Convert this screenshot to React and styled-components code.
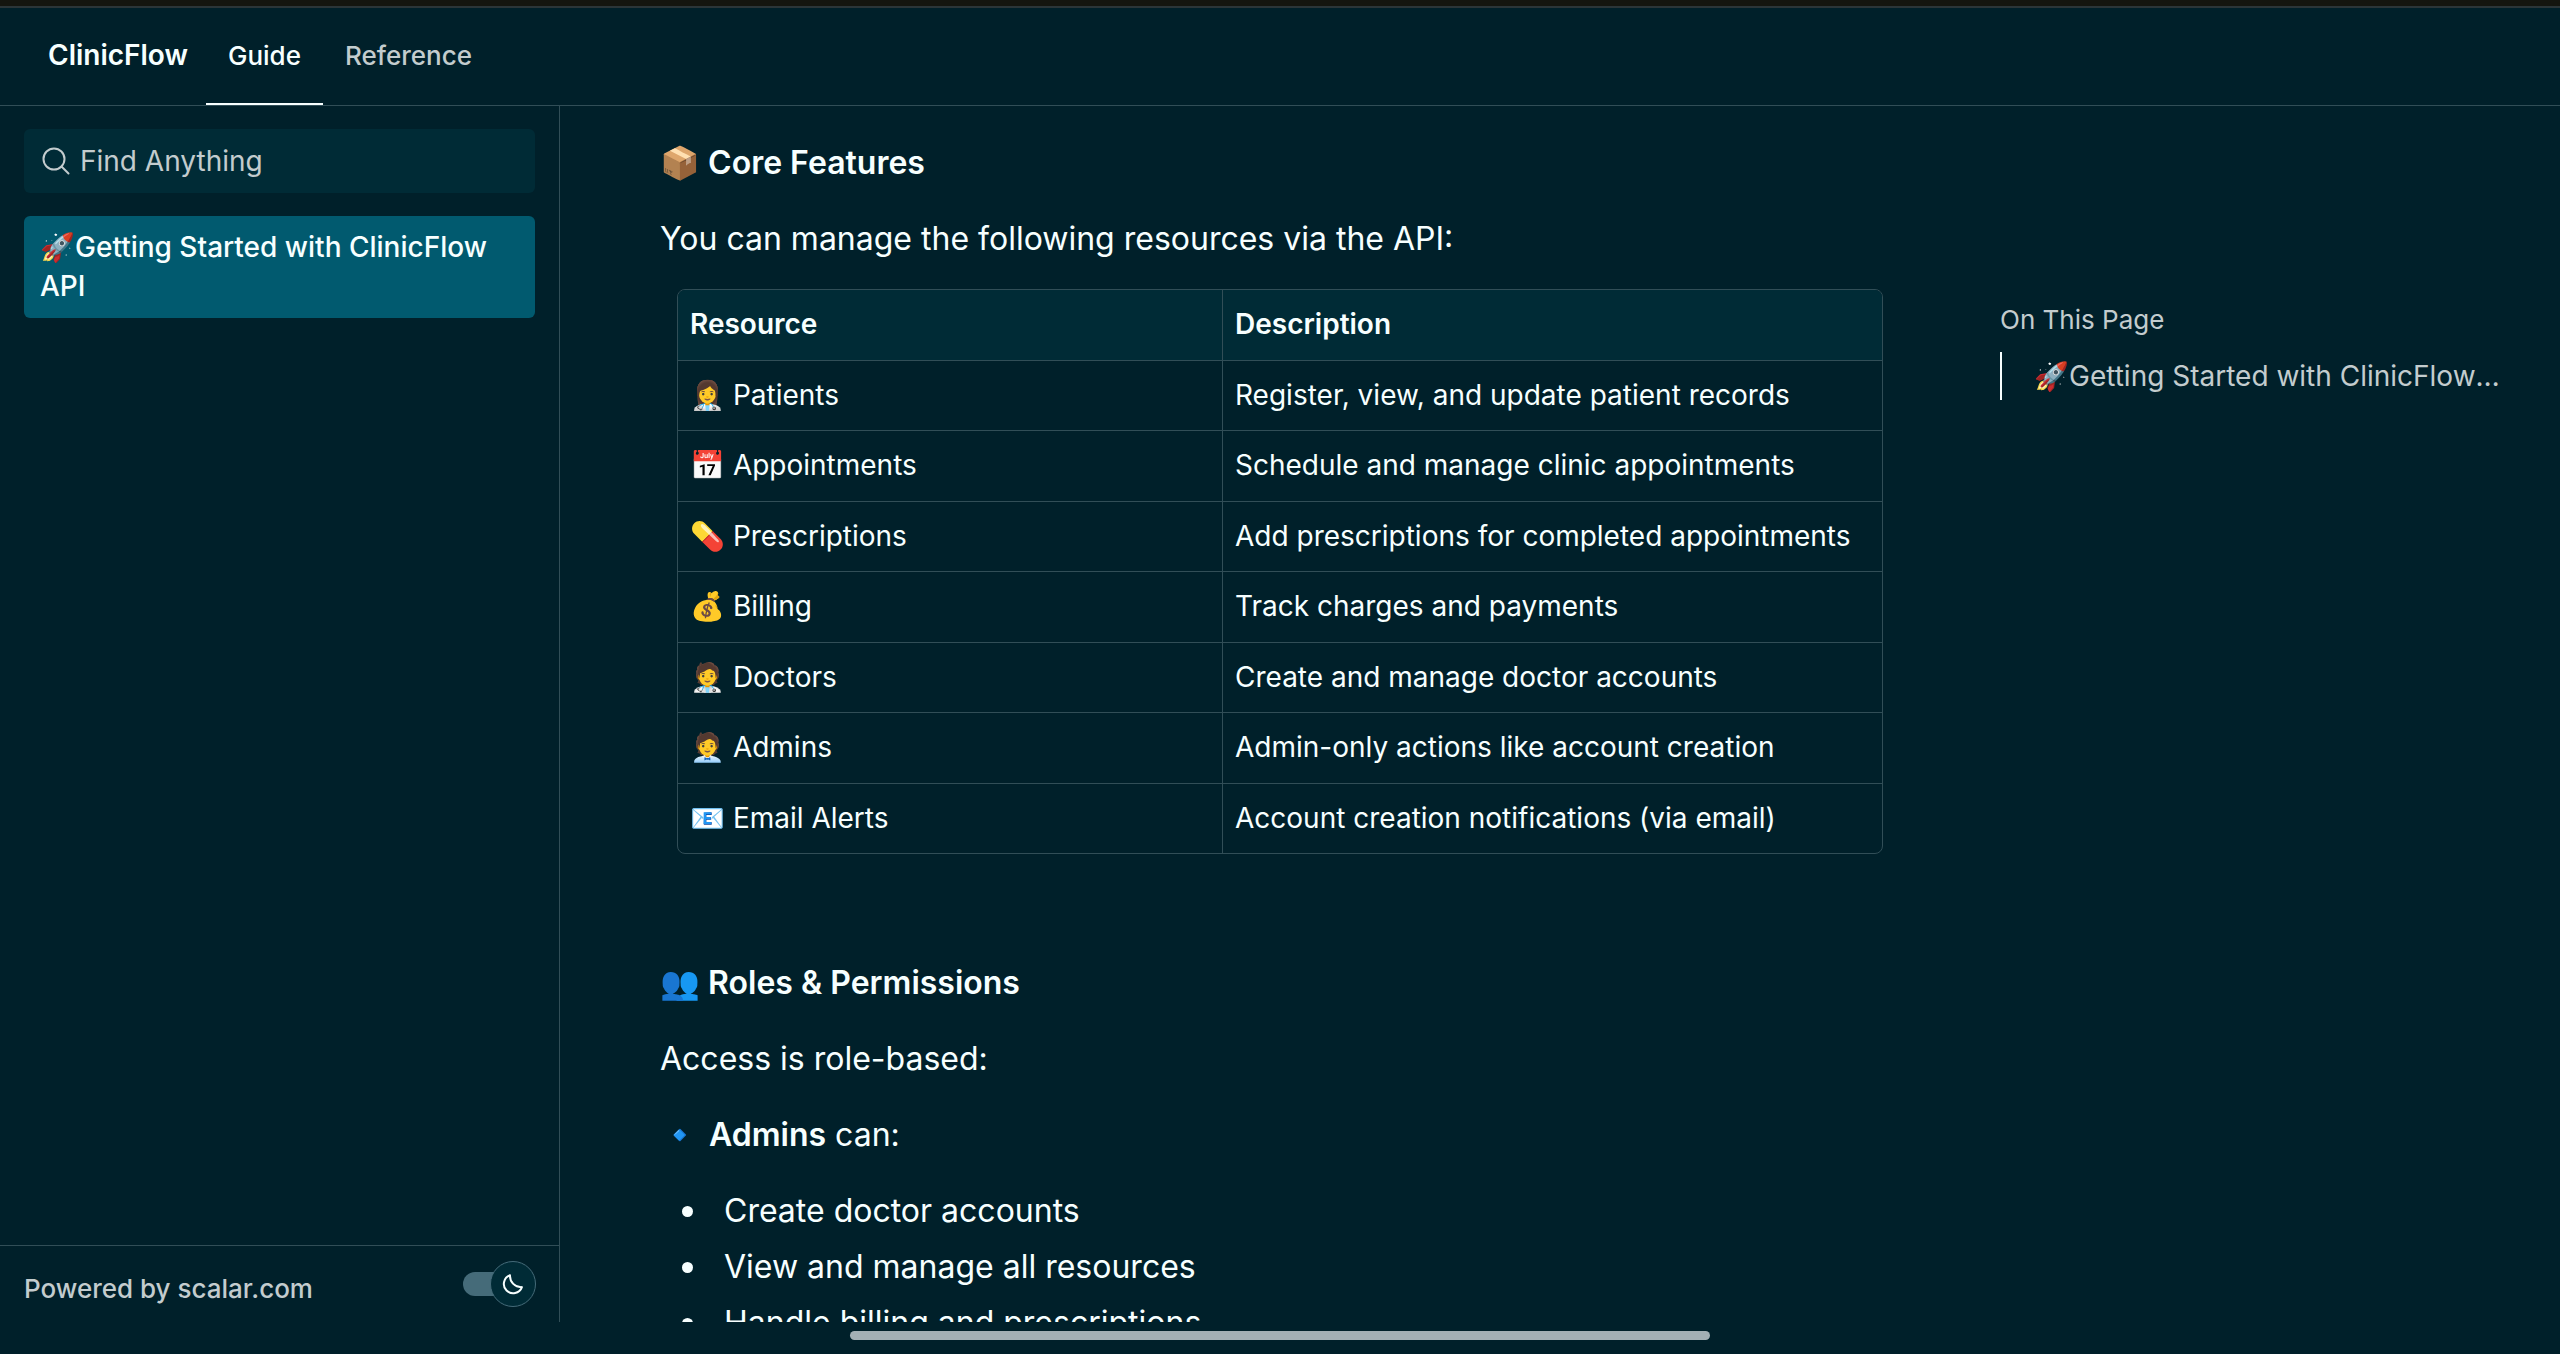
import React, { useState } from "react";
import styled, { createGlobalStyle } from "styled-components";

const color = {
  bg: "#00202a",
  panel: "#002b36",
  active: "#015a6f",
  border: "#314e57",
  text: "#f7ffff",
  muted: "#c3ccce",
  track: "#456b79",
};

const GlobalStyle = createGlobalStyle`
  *, *::before, *::after { box-sizing: border-box; }
  body {
    margin: 0;
    background: ${color.bg};
    color: ${color.text};
    font-family: Inter, "Noto Sans", sans-serif;
    font-size: 28px;
    line-height: 39px;
  }
`;

const Page = styled.div`
  display: flex;
  flex-direction: column;
  height: 100vh;
  overflow: hidden;
`;

const StatusStrip = styled.div`
  flex: none;
  height: 8px;
  background: #14150f;
  border-bottom: 2px solid #2b3538;
`;

const Header = styled.header`
  flex: none;
  display: flex;
  align-items: stretch;
  height: 98px;
  padding-left: 48px;
  border-bottom: 1px solid ${color.border};
`;

const Brand = styled.a`
  display: flex;
  align-items: center;
  padding-bottom: 2px;
  margin-right: 18px;
  color: ${color.text};
  font-weight: 600;
  text-decoration: none;
`;

const Tabs = styled.nav`
  display: flex;
`;

const Tab = styled.a`
  display: flex;
  align-items: center;
  padding: 0 22px;
  border-bottom: 2px solid ${(p) => (p.$active ? color.text : "transparent")};
  color: ${(p) => (p.$active ? color.text : color.muted)};
  font-size: 26px;
  font-weight: 500;
  text-decoration: none;
`;

const Body = styled.div`
  flex: 1;
  min-height: 0;
  display: grid;
  grid-template-columns: 560px minmax(0, 1fr) 560px;
`;

const Sidebar = styled.aside`
  display: flex;
  flex-direction: column;
  border-right: 1px solid ${color.border};
`;

const SearchBox = styled.label`
  display: flex;
  align-items: center;
  gap: 10px;
  height: 64px;
  margin: 23px 24px;
  padding: 0 18px;
  border-radius: 6px;
  background: ${color.panel};
  color: ${color.muted};
`;

const SearchInput = styled.input`
  flex: 1;
  min-width: 0;
  padding: 0;
  border: 0;
  outline: 0;
  background: transparent;
  color: inherit;
  font: inherit;
  &::placeholder {
    color: inherit;
    opacity: 1;
  }
`;

const SideLink = styled.a`
  margin: 0 24px;
  padding: 12px 16px;
  border-radius: 6px;
  background: ${color.active};
  color: ${color.text};
  font-weight: 500;
  text-decoration: none;
`;

const SideFooter = styled.footer`
  display: flex;
  align-items: flex-start;
  justify-content: space-between;
  height: 77px;
  margin-top: auto;
  padding: 15px 23px 0 24px;
  border-top: 1px solid ${color.border};
`;

const PoweredBy = styled.a`
  padding-top: 8px;
  color: ${color.muted};
  font-size: 26px;
  font-weight: 500;
  text-decoration: none;
`;

const ThemeToggle = styled.button`
  display: flex;
  align-items: center;
  padding: 0;
  border: 0;
  background: none;
  color: ${color.text};
  cursor: pointer;
`;

const Track = styled.span`
  width: 44px;
  height: 24px;
  margin-right: -17px;
  border-radius: 12px;
  background: ${color.track};
`;

const Knob = styled.span`
  position: relative;
  display: grid;
  place-items: center;
  width: 46px;
  height: 46px;
  border: 1px solid ${color.track};
  border-radius: 50%;
  background: ${color.panel};
`;

const Article = styled.main`
  min-width: 0;
  overflow: hidden;
  padding: 33px 100px 0;
  font-size: 32px;
  line-height: 48px;
`;

const Heading = styled.h3`
  margin: ${(p) => (p.$spaced ? "105px" : "0")} 0 28px;
  font-size: 32px;
  font-weight: 600;
  line-height: 48px;
`;

const Paragraph = styled.p`
  margin: 0 0 ${(p) => (p.$lead ? "26px" : "28px")};
`;

const Strong = styled.strong`
  font-weight: 600;
`;

const ResourceTable = styled.table`
  width: calc(100% - 34px);
  margin: 0 17px;
  border: 1px solid ${color.border};
  border-radius: 8px;
  border-collapse: separate;
  border-spacing: 0;
  overflow: hidden;
  table-layout: fixed;
  font-size: 28px;
  line-height: 42px;
`;

const cell = `
  height: 70px;
  padding: 0 12px 2px;
  text-align: left;
  &:first-child { border-right: 1px solid ${color.border}; }
`;

const HeadCell = styled.th`
  ${cell}
  width: ${(p) => p.$width};
  background: ${color.panel};
  font-weight: 600;
`;

const Row = styled.tr`
  &:nth-child(even) > td { height: 71px; }
`;

const Cell = styled.td`
  ${cell}
  border-top: 1px solid ${color.border};
`;

const List = styled.ul`
  margin: 0;
  padding-left: 22px;
  list-style: none;
`;

const Item = styled.li`
  display: flex;
  align-items: center;
  margin-bottom: 8px;
  &::before {
    content: "";
    width: 11px;
    height: 11px;
    margin-right: 31px;
    border-radius: 50%;
    background: currentColor;
  }
`;

const Toc = styled.nav`
  padding: 194px 58px 0 0;
  color: ${color.muted};
`;

const TocTitle = styled.div`
  margin-bottom: 13px;
  font-size: 26px;
`;

const TocLink = styled.a`
  display: block;
  padding-left: 32px;
  border-left: 2px solid ${color.text};
  color: inherit;
  line-height: 48px;
  text-decoration: none;
  white-space: nowrap;
  overflow: hidden;
  text-overflow: ellipsis;
`;

const HomeArea = styled.div`
  flex: none;
  display: flex;
  justify-content: center;
  height: 32px;
  padding-top: 9px;
`;

const HomeBar = styled.div`
  width: 860px;
  height: 9px;
  border-radius: 5px;
  background: #a3b0b5;
`;

const SearchIcon = () => (
  <svg width="28" height="28" viewBox="0 0 28 28" fill="none" stroke="currentColor" strokeWidth="2" strokeLinecap="round" aria-hidden="true">
    <circle cx="12" cy="12" r="10.5" />
    <path d="M19.5 19.5 26.5 26.5" />
  </svg>
);

const MoonIcon = () => (
  <svg width="24" height="24" viewBox="0 0 24 24" fill="none" stroke="currentColor" strokeWidth="2" strokeLinecap="round" strokeLinejoin="round" aria-hidden="true">
    <path d="M9 3.2A9.3 9.3 0 1 0 20.9 15.1 11.2 11.2 0 0 1 9 3.2Z" />
  </svg>
);

const resources = [
  ["👩‍⚕️ Patients", "Register, view, and update patient records"],
  ["📅 Appointments", "Schedule and manage clinic appointments"],
  ["💊 Prescriptions", "Add prescriptions for completed appointments"],
  ["💰 Billing", "Track charges and payments"],
  ["🧑‍⚕️ Doctors", "Create and manage doctor accounts"],
  ["🧑‍💼 Admins", "Admin-only actions like account creation"],
  ["📧 Email Alerts", "Account creation notifications (via email)"],
];

const adminActions = [
  "Create doctor accounts",
  "View and manage all resources",
  "Handle billing and prescriptions",
];

export default function App() {
  const [query, setQuery] = useState("");
  return (
    <Page>
      <GlobalStyle />
      <StatusStrip />
      <Header>
        <Brand href="#home">ClinicFlow</Brand>
        <Tabs aria-label="Sections">
          <Tab href="#guide" $active aria-current="page">Guide</Tab>
          <Tab href="#reference">Reference</Tab>
        </Tabs>
      </Header>
      <Body>
        <Sidebar>
          <SearchBox>
            <SearchIcon />
            <SearchInput
              type="text"
              aria-label="Find Anything"
              placeholder="Find Anything"
              value={query}
              onChange={(e) => setQuery(e.target.value)}
            />
          </SearchBox>
          <SideLink href="#getting-started">🚀Getting Started with ClinicFlow API</SideLink>
          <SideFooter>
            <PoweredBy href="#scalar">Powered by scalar.com</PoweredBy>
            <ThemeToggle type="button" aria-label="Toggle dark mode">
              <Track />
              <Knob><MoonIcon /></Knob>
            </ThemeToggle>
          </SideFooter>
        </Sidebar>
        <Article>
          <Heading>📦 Core Features</Heading>
          <Paragraph $lead>You can manage the following resources via the API:</Paragraph>
          <ResourceTable>
            <thead>
              <tr>
                <HeadCell $width="545px">Resource</HeadCell>
                <HeadCell>Description</HeadCell>
              </tr>
            </thead>
            <tbody>
              {resources.map(([name, description]) => (
                <Row key={name}>
                  <Cell>{name}</Cell>
                  <Cell>{description}</Cell>
                </Row>
              ))}
            </tbody>
          </ResourceTable>
          <Heading $spaced>👥 Roles &amp; Permissions</Heading>
          <Paragraph>Access is role-based:</Paragraph>
          <Paragraph>🔹 <Strong>Admins</Strong> can:</Paragraph>
          <List>
            {adminActions.map((action) => (
              <Item key={action}>{action}</Item>
            ))}
          </List>
        </Article>
        <Toc aria-label="On This Page">
          <TocTitle>On This Page</TocTitle>
          <TocLink href="#getting-started">🚀Getting Started with ClinicFlow API</TocLink>
        </Toc>
      </Body>
      <HomeArea>
        <HomeBar />
      </HomeArea>
    </Page>
  );
}
